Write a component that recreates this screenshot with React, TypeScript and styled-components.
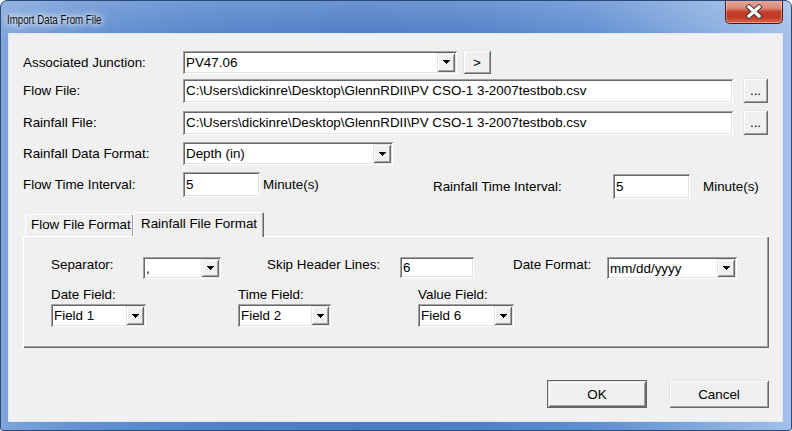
import React from 'react';
import styled, { createGlobalStyle } from 'styled-components';

const Global = createGlobalStyle`
  html, body { margin: 0; padding: 0; background: #ffffff; }
  body { width: 792px; height: 431px; overflow: hidden; }
  #root { width: 792px; height: 431px; }
`;

const raised = `
  box-shadow: inset 1px 1px 0 #e3e3e3, inset -1px -1px 0 #696969, inset 2px 2px 0 #ffffff, inset -2px -2px 0 #a0a0a0;
`;
const sunken = `
  box-shadow: inset 1px 1px 0 #a0a0a0, inset -1px -1px 0 #ffffff, inset 2px 2px 0 #696969, inset -2px -2px 0 #e3e3e3;
`;

const Window = styled.div`
  width: 792px;
  height: 431px;
  box-sizing: border-box;
  display: flex;
  flex-direction: column;
  border: 1px solid #2b4a77;
  border-radius: 7px 7px 3px 3px;
  background:
    linear-gradient(180deg, rgba(255,255,255,0.18) 0%, rgba(255,255,255,0) 40px),
    linear-gradient(90deg, #7ea5dc 0%, #6391d3 10%, #5384ca 25%, #4b7bc5 45%, #5080c8 60%, #5f8ed1 75%, #86acdf 90%, #a2c0e9 100%);
  font-family: "Liberation Sans", Arial, sans-serif;
  font-size: 13.4px;
  color: #000;
  overflow: hidden;
`;

const TitleBar = styled.div`
  height: 32px;
  flex: none;
  display: flex;
  align-items: flex-start;
`;

const Title = styled.span`
  margin: 11px 0 0 6px;
  font-family: "Liberation Sans", Arial, sans-serif;
  font-size: 13.5px;
  line-height: 16px;
  color: #101010;
  white-space: nowrap;
  transform: scaleX(0.72);
  transform-origin: left center;
  text-shadow: 0 0 6px #ffffff, 0 0 10px rgba(255,255,255,0.9), 0 0 14px rgba(255,255,255,0.7);
`;

const CloseBtn = styled.div`
  width: 58px;
  height: 24px;
  margin: -1px 8px 0 auto;
  box-sizing: border-box;
  border: 1px solid #4f1a12;
  border-top: none;
  border-radius: 0 0 5px 5px;
  background: linear-gradient(180deg, #e9a99b 0%, #dc8a7a 35%, #c43d27 52%, #c13b24 75%, #d9664d 100%);
  box-shadow: inset 0 0 0 1px rgba(255, 255, 255, 0.35);
  display: flex;
  align-items: center;
  justify-content: center;
`;

const Client = styled.div`
  flex: 1;
  margin: 0 8px 8px 7px;
  background: #f0f0f0;
  border: 1px solid #dfe7f2;
  display: flex;
  flex-direction: column;
  padding: 16px 13px 0 14px;
`;

const Row = styled.div<{ $mt: number; $align?: string }>`
  display: flex;
  align-items: ${p => p.$align || 'center'};
  margin-top: ${p => p.$mt}px;
`;

const Group = styled.div<{ $mt?: number; $w?: number }>`
  display: flex;
  align-items: center;
  margin-top: ${p => p.$mt || 0}px;
  ${p => (p.$w ? `width: ${p.$w}px;` : '')}
  flex: none;
`;

const Label = styled.span<{ $w?: number; $ml?: number }>`
  flex: none;
  width: ${p => (p.$w ? `${p.$w}px` : 'auto')};
  margin-left: ${p => p.$ml || 0}px;
  line-height: 15px;
  white-space: nowrap;
`;

const Field = styled.div<{ $w: number; $h: number }>`
  flex: none;
  box-sizing: border-box;
  width: ${p => p.$w}px;
  height: ${p => p.$h}px;
  background: #ffffff;
  ${sunken}
  display: flex;
  align-items: center;
  padding: 0 2px 0 3px;
  line-height: 15px;
  white-space: nowrap;
  overflow: hidden;
`;

const Combo = styled.div<{ $w: number; $h: number }>`
  flex: none;
  box-sizing: border-box;
  width: ${p => p.$w}px;
  height: ${p => p.$h}px;
  background: #ffffff;
  ${sunken}
  display: flex;
  align-items: stretch;
  padding: 2px;
`;

const ComboText = styled.span`
  flex: 1;
  display: flex;
  align-items: center;
  padding-left: 1px;
  line-height: 15px;
  white-space: nowrap;
  overflow: hidden;
`;

const DropBtn = styled.span`
  flex: none;
  width: 18px;
  box-sizing: border-box;
  background: #f0f0f0;
  ${raised}
  display: flex;
  align-items: center;
  justify-content: center;
`;

const PushButton = styled.button<{ $w: number; $h: number; $ml?: number; $default?: boolean }>`
  flex: none;
  box-sizing: border-box;
  width: ${p => p.$w}px;
  height: ${p => p.$h}px;
  margin: 0 0 0 ${p => p.$ml || 0}px;
  padding: 0;
  font: inherit;
  color: #000;
  background: #f0f0f0;
  border: ${p => (p.$default ? '1px solid #646464' : 'none')};
  ${raised}
  display: flex;
  align-items: center;
  justify-content: center;
  line-height: 15px;
  cursor: default;
`;

const TabStrip = styled.div`
  display: flex;
  align-items: flex-end;
  height: 24px;
  margin-top: 13px;
  padding-left: 2px;
`;

const Tab = styled.div<{ $active?: boolean }>`
  position: relative;
  z-index: ${p => (p.$active ? 2 : 1)};
  box-sizing: border-box;
  height: ${p => (p.$active ? 25 : 22)}px;
  width: ${p => (p.$active ? 131 : 109)}px;
  margin-left: ${p => (p.$active ? -1 : 0)}px;
  margin-bottom: ${p => (p.$active ? -1 : 0)}px;
  padding: ${p => (p.$active ? '4px 0 0 8px' : '3px 0 0 6px')};
  background: #f0f0f0;
  border-radius: 2px 2px 0 0;
  box-shadow: inset 1px 1px 0 #ffffff, inset -1px 0 0 #696969, inset -2px 0 0 #a0a0a0;
  line-height: 15px;
  white-space: nowrap;
`;

const Panel = styled.div`
  box-sizing: border-box;
  width: 746px;
  height: 112px;
  background: #f0f0f0;
  box-shadow: inset 1px 1px 0 #ffffff, inset -1px -1px 0 #696969, inset -2px -2px 0 #a0a0a0;
  padding: 21px 0 0 28px;
  display: flex;
  flex-direction: column;
`;

const Stack = styled.div<{ $w?: number }>`
  flex: none;
  ${p => (p.$w ? `width: ${p.$w}px;` : '')}
  display: flex;
  flex-direction: column;
  align-items: flex-start;
  gap: 2px;
`;

const ButtonRow = styled.div`
  display: flex;
  justify-content: flex-end;
  gap: 22px;
  margin-top: 32px;
`;

const Arrow = () => (
  <svg width="7" height="4" viewBox="0 0 7 4" shapeRendering="crispEdges">
    <rect x="0" y="0" width="7" height="1" fill="#000" />
    <rect x="1" y="1" width="5" height="1" fill="#000" />
    <rect x="2" y="2" width="3" height="1" fill="#000" />
    <rect x="3" y="3" width="1" height="1" fill="#000" />
  </svg>
);

const CloseIcon = () => (
  <svg width="18" height="15" viewBox="0 0 18 15">
    <path d="M4 3 L14 12 M14 3 L4 12" stroke="#3c3c3c" strokeWidth="5.2" strokeLinecap="square" fill="none" />
    <path d="M4 3 L14 12 M14 3 L4 12" stroke="#ffffff" strokeWidth="3.2" strokeLinecap="square" fill="none" />
  </svg>
);

const ComboBox = ({ w, h, value }: { w: number; h: number; value: string }) => (
  <Combo $w={w} $h={h}>
    <ComboText>{value}</ComboText>
    <DropBtn>
      <Arrow />
    </DropBtn>
  </Combo>
);

const path = 'C:\\Users\\dickinre\\Desktop\\GlennRDII\\PV CSO-1 3-2007testbob.csv';

export default function App() {
  return (
    <>
      <Global />
      <Window>
        <TitleBar>
          <Title>Import Data From File</Title>
          <CloseBtn>
            <CloseIcon />
          </CloseBtn>
        </TitleBar>
        <Client>
          <Row $mt={0}>
            <Label $w={160}>Associated Junction:</Label>
            <ComboBox w={274} h={23} value="PV47.06" />
            <PushButton $w={28} $h={24} $ml={6}>&gt;</PushButton>
          </Row>
          <Row $mt={4}>
            <Label $w={160}>Flow File:</Label>
            <Field $w={550} $h={24}>{path}</Field>
            <PushButton $w={25} $h={25} $ml={10}>...</PushButton>
          </Row>
          <Row $mt={7}>
            <Label $w={160}>Rainfall File:</Label>
            <Field $w={550} $h={24}>{path}</Field>
            <PushButton $w={25} $h={25} $ml={10}>...</PushButton>
          </Row>
          <Row $mt={7}>
            <Label $w={160}>Rainfall Data Format:</Label>
            <ComboBox w={210} h={23} value="Depth (in)" />
          </Row>
          <Row $mt={7} $align="flex-start">
            <Group>
              <Label $w={160}>Flow Time Interval:</Label>
              <Field $w={77} $h={25}>5</Field>
              <Label $w={170} $ml={3}>Minute(s)</Label>
            </Group>
            <Group $mt={2}>
              <Label $w={180}>Rainfall Time Interval:</Label>
              <Field $w={77} $h={25}>5</Field>
              <Label $ml={13}>Minute(s)</Label>
            </Group>
          </Row>
          <TabStrip>
            <Tab>Flow File Format</Tab>
            <Tab $active>Rainfall File Format</Tab>
          </TabStrip>
          <Panel>
            <Row $mt={0} $align="flex-start">
              <Label $w={92}>Separator:</Label>
              <ComboBox w={78} h={22} value="," />
              <Label $w={133} $ml={46}>Skip Header Lines:</Label>
              <Field $w={74} $h={21}>6</Field>
              <Label $w={94} $ml={39}>Date Format:</Label>
              <ComboBox w={130} h={22} value="mm/dd/yyyy" />
            </Row>
            <Row $mt={8} $align="flex-start">
              <Stack $w={187}>
                <Label>Date Field:</Label>
                <ComboBox w={95} h={23} value="Field 1" />
              </Stack>
              <Stack $w={180}>
                <Label>Time Field:</Label>
                <ComboBox w={93} h={23} value="Field 2" />
              </Stack>
              <Stack>
                <Label>Value Field:</Label>
                <ComboBox w={96} h={23} value="Field 6" />
              </Stack>
            </Row>
          </Panel>
          <ButtonRow>
            <PushButton $w={100} $h={28} $default>OK</PushButton>
            <PushButton $w={100} $h={28}>Cancel</PushButton>
          </ButtonRow>
        </Client>
      </Window>
    </>
  );
}
